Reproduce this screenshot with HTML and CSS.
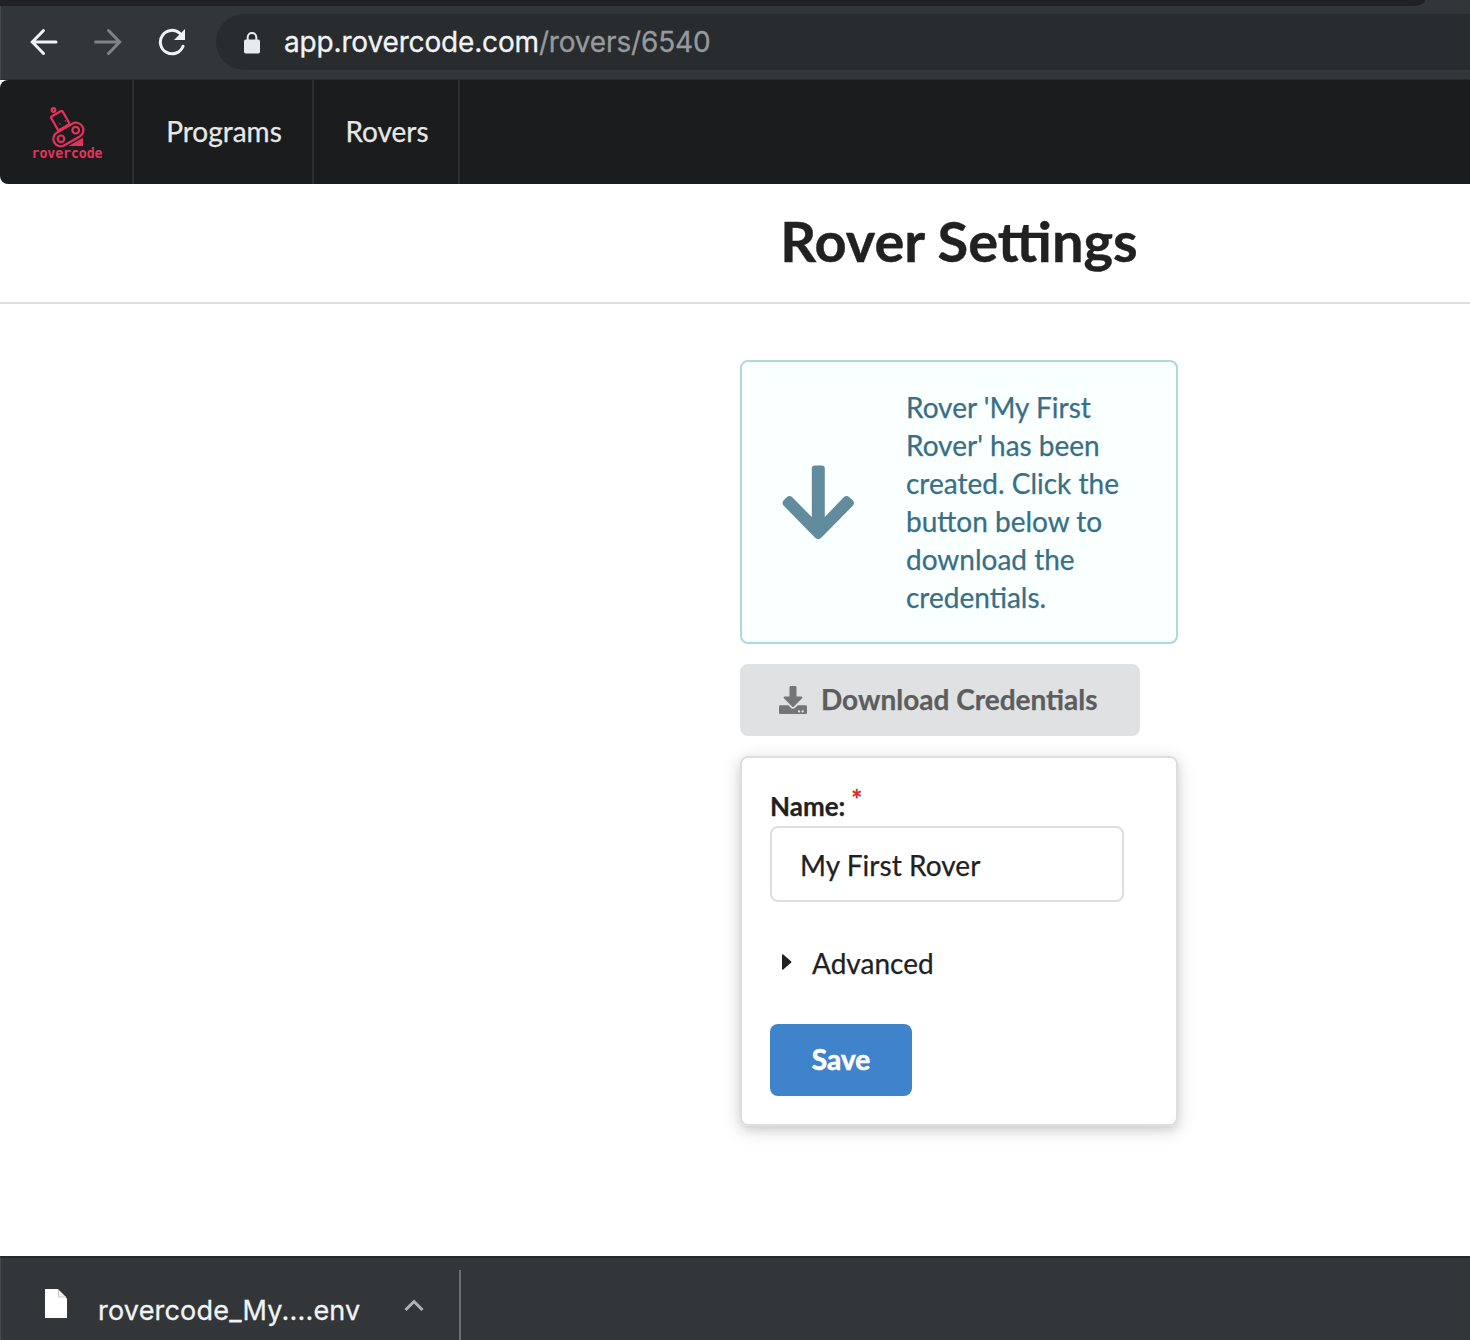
FILE: index.html
```html
<!DOCTYPE html>
<html lang="en">
<head>
<meta charset="utf-8">
<title>Rover Settings</title>
<link rel="stylesheet" href="styles.css">
</head>
<body>
<div class="window">
  <div class="tabstrip"><div class="tabstrip-end"></div></div>
  <div class="toolbar">
    <svg class="nav-icon back" width="28" height="28" viewBox="0 0 28 28"><path d="M26 14H3M13.500 2.500L2.300 14L13.500 25.500"/></svg>
    <svg class="nav-icon forward" width="28" height="28" viewBox="0 0 28 28"><path d="M1.500 14H25M14.500 2.500L25.700 14L14.500 25.500"/></svg>
    <svg class="nav-icon reload" width="28" height="28" viewBox="0 0 28 28"><path d="M25 18.200A11.700 11.700 0 1 1 22 5.500"/><path class="solid" d="M27 1V12H16Z"/></svg>
    <div class="address">
      <svg class="lock" width="18" height="22" viewBox="0 0 18 22"><rect x="1" y="7.500" width="16" height="14" rx="1.800"/><path d="M4.700 8V5.200a4.300 4.300 0 0 1 8.600 0V8"/></svg>
      <div class="url">app.rovercode.com<span class="path">/rovers/6540</span></div>
    </div>
  </div>
  <div class="viewport">
    <nav class="menu">
      <a class="item brand">
        <svg class="logo" width="78" height="60" viewBox="28 105 78 60">
          <g class="lines">
            <circle cx="53.500" cy="110" r="1.800"/>
            <rect x="-6.600" y="-7.800" width="13.200" height="15.600" rx="1.700" transform="translate(60.200 120.500) rotate(-30)"/>
            <rect x="-16.200" y="-7.400" width="32.400" height="14.800" rx="7.400" transform="translate(68.400 134.500) rotate(-30)"/>
            <circle cx="61" cy="138.800" r="3.300"/>
            <circle cx="75.700" cy="130.200" r="3.300"/>
          </g>
          <path class="fill" d="M68.500 146L83 137.800V146Z"/>
          <circle class="fill" cx="60" cy="124" r=".8"/><circle class="fill" cx="65.500" cy="121" r=".8"/>
          <text x="31.500" y="157.500" textLength="71" lengthAdjust="spacingAndGlyphs">rovercode</text>
        </svg>
      </a>
      <a class="item programs">Programs</a>
      <a class="item rovers">Rovers</a>
    </nav>
    <header class="heading"><h1>Rover Settings</h1></header>
    <main class="content">
      <div class="message">
        <svg class="arrow" width="72" height="75" viewBox="0 0 72 75"><path d="M29.800 3.500Q29.800.5 32.800.5H39.800Q42.800.5 42.800 3.500V52L61.500 32.500Q64.500 29.700 67.500 32.500L70.500 35Q73.500 38 70.500 41L39.500 72.500Q36.200 75.800 32.900 72.500L2 41Q-1 38 2 35L4.500 32.500Q7.500 29.700 10.500 32.500L29.800 52Z"/></svg>
        <p>Rover 'My First<br>Rover' has been<br>created. Click the<br>button below to<br>download the<br>credentials.</p>
      </div>
      <button class="button download">
        <svg width="28" height="28" viewBox="0 0 512 512"><path d="M216 0h80c13.300 0 24 10.700 24 24v168h87.700c17.800 0 26.700 21.500 14.100 34.100L269.700 378.300c-7.500 7.500-19.800 7.500-27.300 0L90.100 226.100c-12.600-12.600-3.700-34.100 14.100-34.100H192V24c0-13.300 10.700-24 24-24zm296 376v112c0 13.300-10.700 24-24 24H24c-13.300 0-24-10.700-24-24V376c0-13.300 10.700-24 24-24h146.700l49 49c20.100 20.100 52.500 20.100 72.600 0l49-49H488c13.300 0 24 10.700 24 24zm-124 88c0-11-9-20-20-20s-20 9-20 20 9 20 20 20 20-9 20-20zm64 0c0-11-9-20-20-20s-20 9-20 20 9 20 20 20 20-9 20-20z"/></svg>
        <span>Download Credentials</span>
      </button>
      <form class="card">
        <label for="name">Name:<sup>*</sup></label>
        <input id="name" type="text" value="My First Rover">
        <div class="advanced"><svg width="10" height="16" viewBox="0 0 10 16"><path d="M0 1.200Q0-.5 1.300.6L9 7.200Q9.800 8 9 8.800L1.300 15.400Q0 16.500 0 14.800Z"/></svg><span>Advanced</span></div>
        <button class="button save" type="button">Save</button>
      </form>
    </main>
  </div>
  <footer class="shelf">
    <div class="download-item">
      <svg class="file" width="24" height="30" viewBox="0 0 24 30"><path d="M1 0H14L23 9.500V29H1Z"/><path class="fold" d="M14.500 1V8H22"/></svg>
      <span class="filename">rovercode_My....env</span>
      <svg class="chevron" width="20" height="14" viewBox="0 0 20 14"><path d="M1.500 12L10 3.500L18.500 12"/></svg>
    </div>
  </footer>
</div>
</body>
</html>
```
FILE: styles.css
```css
* { box-sizing: border-box; }
body { margin: 0; overflow: hidden; background: #fff; color: #212121; font: 28px/1.4285 Lato, sans-serif; -webkit-text-stroke: .25px; }
.window { width: 100%; height: 1340px; display: flex; flex-direction: column; overflow: hidden; }
.tabstrip { height: 6px; background: #323639; }
.tabstrip-end { width: 1425px; height: 6px; background: #202124; border-bottom-right-radius: 14px 7px; }
.toolbar { height: 74px; padding: 8px 0 10px 29px; display: flex; align-items: center; background: #323639; border-bottom: 1px solid #292c2e; border-left: 1px solid #45494c; }
.nav-icon { flex: none; fill: none; stroke: #f1f3f4; stroke-width: 3; stroke-linecap: round; }
.forward { margin-left: 36px; stroke: #818486; }
.reload { margin-left: 36px; }
.nav-icon .solid { fill: #f1f3f4; stroke: none; }
.address { flex: 1; height: 56px; margin-left: 30px; padding-left: 27px; display: flex; align-items: center; background: #282c2f; border-radius: 28px 0 0 28px; }
.lock { flex: none; margin-top: 2px; fill: #e8eaed; }
.lock path { fill: none; stroke: #e8eaed; stroke-width: 2; }
.url { margin: 1px 0 0 23px; color: #f1f3f4; font: 28px/36px Inter, sans-serif; letter-spacing: -.16px; white-space: nowrap; -webkit-text-stroke: .3px; }
.path { color: #969a9d; }
.viewport { flex: 1; display: flex; flex-direction: column; overflow: hidden; }
.menu { width: 1918px; height: 104px; flex: none; display: flex; background: #1b1c1d; border-radius: 8px; }
.item { padding-left: 2px; display: flex; align-items: center; justify-content: center; border-right: 2px solid #2d2e2f; color: #e8e8e8; }
.brand { width: 134px; padding-top: 6px; }
.programs { width: 180px; }
.rovers { width: 146px; }
.logo { flex: none; overflow: visible; }
.logo .lines { fill: none; stroke: #e6325a; stroke-width: 2.200; }
.logo .fill, .logo text { fill: #e6325a; }
.logo text { font: 700 14px "DejaVu Sans Mono", monospace; -webkit-text-stroke: 0; }
.heading { width: 1918px; height: 120px; flex: none; display: flex; justify-content: center; border-bottom: 2px solid #dedede; }
h1 { margin: 21px 0 0; font-size: 56px; line-height: 72px; font-weight: 700; -webkit-text-stroke: .4px; }
.content { width: 1918px; padding-top: 56px; display: flex; flex-direction: column; align-items: center; }
.message { width: 438px; height: 284px; padding: 0 40px; display: flex; align-items: center; gap: 52px; background: #faffff; border: 2px solid #b0d6de; border-radius: 8px; }
.message p { margin: 0; line-height: 38px; white-space: nowrap; color: #386e86; }
.arrow { flex: none; fill: #628b9e; }
.button { border: 0; border-radius: 8px; font: 700 28px/28px Lato, sans-serif; height: 72px; padding: 0 0 2px; display: flex; align-items: center; -webkit-text-stroke: .25px; }
.download { width: 400px; margin: 20px 38px 20px 0; padding: 0 0 2px 39px; gap: 14px; background: #e0e1e2; color: #5c5d5e; white-space: nowrap; }
.download svg { flex: none; margin-top: 1px; fill: #747576; }
.card { width: 438px; height: 370px; padding: 28px; display: flex; flex-direction: column; align-items: flex-start; border: 2px solid #dddedf; border-radius: 8px; box-shadow: 0 4px 8px rgba(34,36,38,.12), 0 4px 20px rgba(34,36,38,.15); }
label { height: 40px; font-size: 26px; line-height: 40px; font-weight: 700; }
sup { margin-left: 6px; font-size: 26px; line-height: 0; vertical-align: 7px; color: #db2828; font-weight: 700; -webkit-text-stroke: .3px; }
input { width: 354px; height: 76px; padding: 2px 28px 0; border: 2px solid #dedede; border-radius: 8px; background: #fff; color: #212121; font: 28px Lato, sans-serif; letter-spacing: .05px; -webkit-text-stroke: .25px; }
.advanced { margin: 42px 0 40px 12px; height: 40px; display: flex; align-items: center; gap: 20px; }
.advanced svg { margin-bottom: 4px; fill: #212121; }
.save { width: 142px; justify-content: center; background: #3f83cb; color: #fff; -webkit-text-stroke: .6px; }
.shelf { height: 84px; flex: none; background: #323639; border-top: 2px solid #27292b; border-left: 1px solid #45494c; display: flex; align-items: flex-end; }
.download-item { width: 460px; height: 70px; padding-left: 43px; display: flex; align-items: center; border-right: 2px solid #6c6e70; }
.file { flex: none; margin-bottom: 2px; fill: #fff; }
.fold { fill: #f1f1f1; stroke: #c8c8c8; }
.filename { width: 264px; margin: 12px 0 0 30px; color: #f1f3f4; font: 27px/36px Inter, sans-serif; letter-spacing: .2px; white-space: nowrap; -webkit-text-stroke: .3px; }
.chevron { margin-left: 42px; fill: none; stroke: #b0b2b4; stroke-width: 3; }
```
